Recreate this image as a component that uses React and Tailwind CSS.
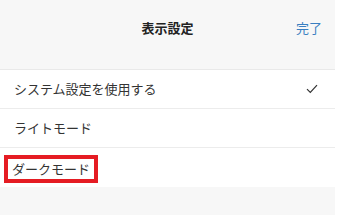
import React from "react";

const rows = [
  { label: "システム設定を使用する", checked: true },
  { label: "ライトモード", checked: false },
];

function App() {
  return (
    <div
      className="w-[340px] h-[215px] bg-white overflow-hidden"
      style={{ fontFamily: '"Noto Sans CJK JP", "Noto Sans", sans-serif' }}
    >
      <div className="w-[335px] h-full flex flex-col bg-[#f7f7f7]">
        {/* ヘッダー */}
        <div className="h-[70px] shrink-0 border-b border-[#e9e9e9] relative">
          <div className="pt-[18px] text-center text-[13px] leading-[20px] font-semibold text-[#222]">
            表示設定
          </div>
          <div className="absolute right-[13px] top-[18px] text-[13px] leading-[20px] text-[#3a7fc1]">
            完了
          </div>
        </div>

        {/* リスト */}
        <div className="bg-white">
          {rows.map((row) => (
            <div
              key={row.label}
              className="h-[39px] flex items-center justify-between pl-[14px] pr-[17px] border-b border-[#ececec] text-[13px] text-[#333]"
            >
              <span>{row.label}</span>
              {row.checked && (
                <svg width="12" height="10" viewBox="0 0 12 10" fill="none">
                  <path d="M1 5.2 L4.3 8.5 L11 1.2" stroke="#333" strokeWidth="1.2" />
                </svg>
              )}
            </div>
          ))}
          <div className="h-[39px] flex items-center pl-[4px]">
            <span className="border-4 border-[#e51c23] h-[28px] px-[4px] flex items-center text-[13px] text-[#333] mt-[3px]">
              ダークモード
            </span>
          </div>
        </div>
      </div>
    </div>
  );
}

export default App;
